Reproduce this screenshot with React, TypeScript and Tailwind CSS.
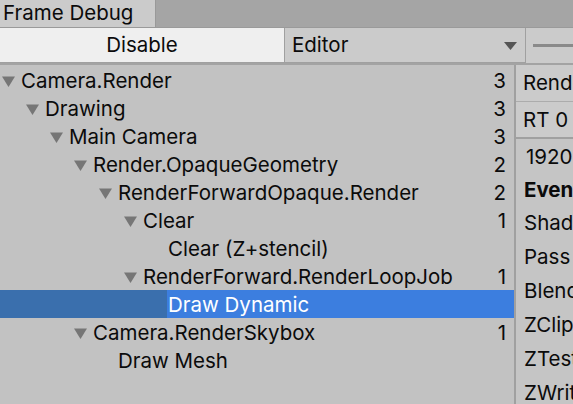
import React from "react";

type Node = { label: string; level: number; count?: number; open?: boolean; selected?: boolean };

const TREE: Node[] = [
  { label: "Camera.Render", level: 0, count: 3, open: true },
  { label: "Drawing", level: 1, count: 3, open: true },
  { label: "Main Camera", level: 2, count: 3, open: true },
  { label: "Render.OpaqueGeometry", level: 3, count: 2, open: true },
  { label: "RenderForwardOpaque.Render", level: 4, count: 2, open: true },
  { label: "Clear", level: 5, count: 1, open: true },
  { label: "Clear (Z+stencil)", level: 6 },
  { label: "RenderForward.RenderLoopJob", level: 5, count: 1, open: true },
  { label: "Draw Dynamic", level: 6, selected: true },
  { label: "Camera.RenderSkybox", level: 3, count: 1, open: true },
  { label: "Draw Mesh", level: 4 },
];

// indent per depth, spelled out so Tailwind picks them up
const INDENT = ["pl-[2px]", "pl-[26px]", "pl-[50px]", "pl-[74px]", "pl-[99px]", "pl-[124px]", "pl-[149px]"];

function Foldout() {
  return (
    <svg aria-hidden width="13" height="11" viewBox="0 0 13 11" className="shrink-0">
      <path d="M0 0.5 H13 L6.5 11 Z" fill="#767676" />
    </svg>
  );
}

function TreeRow({ node }: { node: Node }) {
  return (
    <div
      className={
        "flex h-[28px] items-center pt-[3px] pr-[8px] " +
        INDENT[node.level] +
        (node.selected
          ? " bg-[linear-gradient(to_right,#3a6fad_167px,#3c7edf_167px)] text-white"
          : " text-[#0b0b0b]")
      }
    >
      {node.open ? <Foldout /> : <span className="w-[13px] shrink-0" />}
      <span className="ml-[6px] whitespace-nowrap">{node.label}</span>
      {node.count !== undefined ? <span className="ml-auto">{node.count}</span> : null}
    </div>
  );
}

export default function App() {
  return (
    <div className="h-[404px] w-[573px] overflow-hidden bg-[#c2c2c2] font-['Inter','Liberation_Sans',sans-serif] text-[20.5px] leading-none text-[#0b0b0b]">
      {/* Tab strip */}
      <div className="flex h-[28px] border-b border-[#9a9a9a] bg-[#a5a5a5]">
        <div className="flex w-[156px] items-center border-r border-[#999] bg-[#cbcbcb] pl-[3px] pb-[1px]">
          Frame Debug
        </div>
      </div>

      {/* Toolbar */}
      <div className="flex h-[37px] border-b-2 border-[#a3a3a3] bg-[#cbcbcb]">
        <button
          type="button"
          className="flex w-[285px] items-center justify-center border-r border-b border-[#a0a0a0] bg-[#efefef] pt-[1px]"
        >
          Disable
        </button>
        <div className="flex w-[241px] items-center border-r border-b border-[#a0a0a0] bg-[#cbcbcb] pl-[7px] pr-[8px] pt-[1px]">
          <span>Editor</span>
          <svg aria-hidden width="13" height="8" viewBox="0 0 13 8" className="ml-auto">
            <path d="M0 0 H13 L6.5 8 Z" fill="#555" />
          </svg>
        </div>
        <div className="flex flex-1 items-center pl-[7px]">
          <div className="h-[3px] w-full bg-[#8a8a8a]" />
        </div>
      </div>

      {/* Body */}
      <div className="flex h-[339px]">
        <div className="w-[516px] shrink-0 border-r-2 border-[#a0a0a0] pt-[1px]">
          {TREE.map((n) => (
            <TreeRow key={n.label} node={n} />
          ))}
        </div>
        <div className="flex-1 overflow-hidden whitespace-nowrap bg-[#c5c5c5]">
          <div className="flex h-[37px] items-center border-b border-[#acacac] bg-[#cbcbcb] pl-[7px] pt-[1px]">RenderTarget</div>
          <div className="flex h-[37px] items-center border-b-2 border-[#a0a0a0] bg-[#cbcbcb] pl-[7px] pt-[1px]">RT 0</div>
          <div className="flex h-[35px] items-center pl-[10px] pt-[1px]">1920x1080 ARGB32</div>
          <div className="flex h-[33px] items-center pl-[8px] font-bold">Event #9: Draw Dynamic</div>
          <div className="flex h-[33px] items-center pl-[8px]">Shader</div>
          <div className="flex h-[34px] items-center pl-[8px]">Pass</div>
          <div className="flex h-[34px] items-center pl-[8px]">Blend</div>
          <div className="flex h-[34px] items-center pl-[8px]">ZClip</div>
          <div className="flex h-[34px] items-center pl-[8px]">ZTest</div>
          <div className="flex h-[34px] items-center pl-[8px]">ZWrite</div>
        </div>
      </div>
    </div>
  );
}
